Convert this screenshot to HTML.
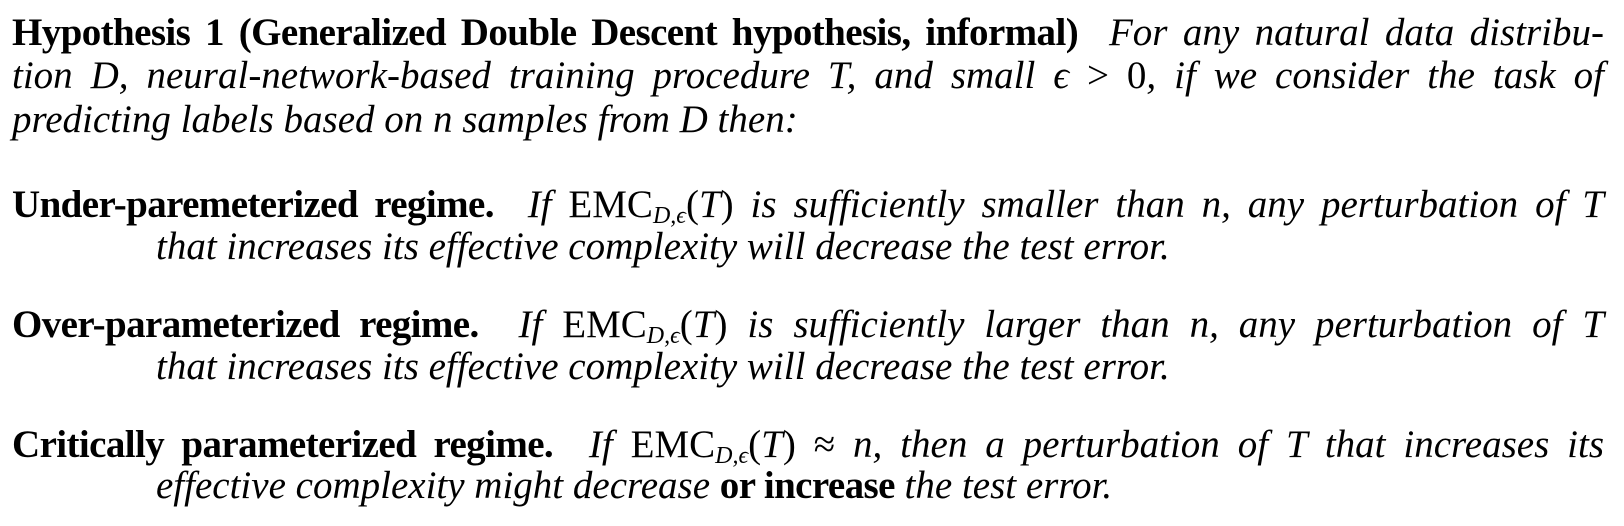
<!DOCTYPE html>
<html><head><meta charset="utf-8"><style>
html,body{margin:0;padding:0;background:#fff;}
body{width:1624px;height:526px;position:relative;overflow:hidden;font-family:"Liberation Serif",serif;color:#000;font-size:39px;}
.l{position:absolute;left:12px;white-space:nowrap;line-height:1;}
.j{width:1592px;text-align:justify;text-align-last:justify;}
.i{font-style:italic;}
b{font-weight:bold;letter-spacing:-0.6px;}
.ind{left:156px;}
sub{font-size:24px;vertical-align:-6px;font-style:italic;}
.u{font-style:normal;}
</style></head><body>
<div class="l j" style="top:13px"><b>Hypothesis 1 (Generalized Double Descent hypothesis, informal)</b>&nbsp; <span class="i">For any natural data distribu-</span></div>
<div class="l j i" style="top:56px">tion <i>D</i>, neural-network-based training procedure <i>T</i>, and small ϵ <span class="u">&gt; 0</span>, if we consider the task of</div>
<div class="l i" style="top:100px">predicting labels based on n samples from D then:</div>

<div class="l j" style="top:185px"><b>Under-paremeterized regime.</b>&nbsp; <span class="i">If <span class="u">EMC</span><sub>D,ϵ</sub><span class="u">(</span>T<span class="u">)</span> is sufficiently smaller than n, any perturbation of T</span></div>
<div class="l ind i" style="top:227px">that increases its effective complexity will decrease the test error.</div>

<div class="l j" style="top:305px"><b>Over-parameterized regime.</b>&nbsp; <span class="i">If <span class="u">EMC</span><sub>D,ϵ</sub><span class="u">(</span>T<span class="u">)</span> is sufficiently larger than n, any perturbation of T</span></div>
<div class="l ind i" style="top:347px">that increases its effective complexity will decrease the test error.</div>

<div class="l j" style="top:425px"><b>Critically parameterized regime.</b>&nbsp; <span class="i">If <span class="u">EMC</span><sub>D,ϵ</sub><span class="u">(</span>T<span class="u">) ≈</span> n, then a perturbation of T that increases its</span></div>
<div class="l ind" style="top:466px"><span class="i">effective complexity might decrease</span> <b>or increase</b> <span class="i">the test error.</span></div>
</body></html>
